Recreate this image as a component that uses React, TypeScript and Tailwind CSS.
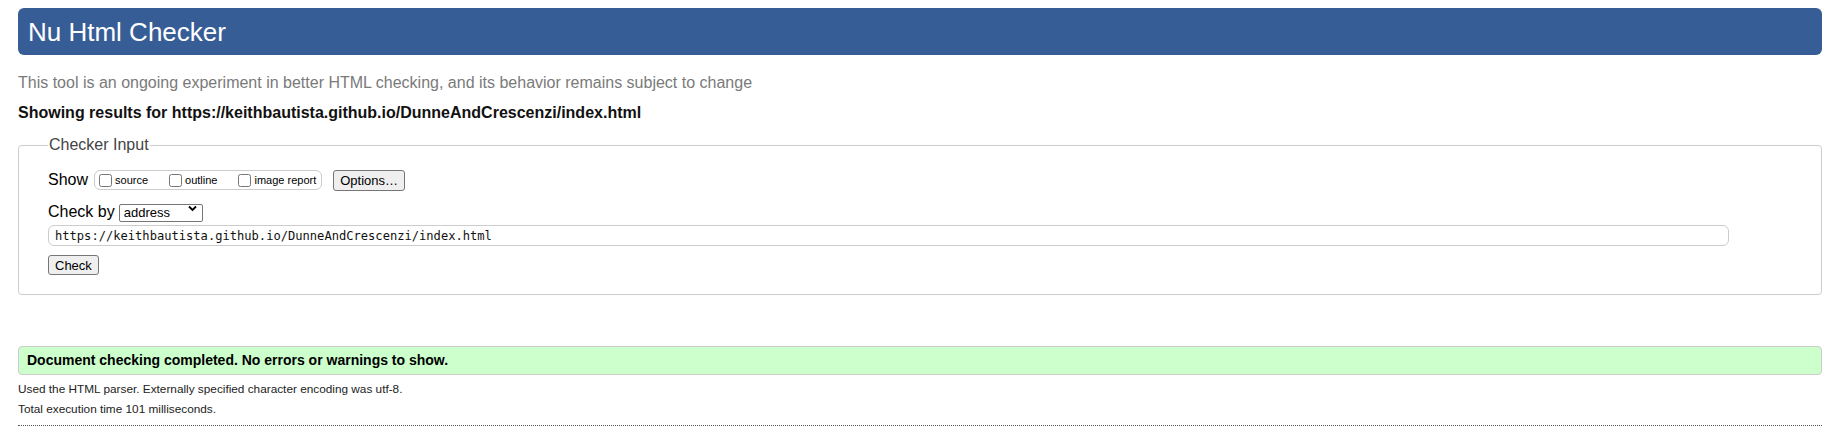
import React from 'react';

const App: React.FC = () => {
  const url = 'https://keithbautista.github.io/DunneAndCrescenzi/index.html';

  return (
    <div className="w-full h-[442px] bg-white pl-[18px] pr-[8px] pt-[8px] font-['Liberation_Sans',Arial,sans-serif] text-black">
      <h1 className="h-[47px] bg-[#375d96] rounded-[6px] text-white text-[26px] leading-none pl-[10px] flex items-center">
        Nu Html Checker
      </h1>

      <p className="mt-[19px] text-[16px] leading-[18px] text-[#7a7a7a]">
        This tool is an ongoing experiment in better HTML checking, and its behavior remains subject to change
      </p>
      <p className="mt-[12px] text-[16px] leading-[18px] font-bold text-[#111]">Showing results for {url}</p>

      <fieldset className="mt-[14px] border border-[#cccccc] rounded-[4px] pl-[29px] pt-[15px] pb-[17px]">
        <legend className="text-[16px] leading-[18px] text-[#444] px-px">Checker Input</legend>

        <div className="flex items-center h-[22px]">
          <span className="text-[16px] leading-none">Show</span>
          <div className="ml-[6px] flex items-center h-[20px] border border-[#cccccc] rounded-[6px] pl-[4px] pr-[5px] text-[11px]">
            <label className="flex items-center">
              <input type="checkbox" className="w-[13px] h-[13px] m-0 mr-[3px]" />
              <span>source</span>
            </label>
            <label className="flex items-center ml-[21px]">
              <input type="checkbox" className="w-[13px] h-[13px] m-0 mr-[3px]" />
              <span>outline</span>
            </label>
            <label className="flex items-center ml-[21px]">
              <input type="checkbox" className="w-[13px] h-[13px] m-0 mr-[3px]" />
              <span>image report</span>
            </label>
          </div>
          <button className="ml-[11px] h-[21px] px-[6px] border border-[#767676] bg-[#efefef] rounded-[3px] text-[13px] leading-none">
            Options…
          </button>
        </div>

        <div className="mt-[10px] flex items-center h-[22px]">
          <span className="text-[16px] leading-none">Check by</span>
          <div className="relative ml-[4px]">
            <select className="appearance-none w-[84px] h-[18px] border border-[#767676] rounded-[2px] pl-[4px] text-[13px] leading-none bg-white">
              <option>address</option>
            </select>
            <svg className="absolute right-[6px] top-[5px] pointer-events-none" width="9" height="7" viewBox="0 0 9 7">
              <path d="M1 1.5 L4.5 5 L8 1.5" fill="none" stroke="#000" strokeWidth="1.8" />
            </svg>
          </div>
        </div>

        <input
          type="text"
          readOnly
          value={url}
          className="block mt-[2px] w-[1681px] h-[21px] border border-[#cccccc] rounded-[6px] pl-[6px] font-['DejaVu_Sans_Mono',monospace] text-[12.1px] text-[#111]"
        />

        <button className="mt-[9px] h-[20px] px-[6px] border border-[#767676] bg-[#efefef] rounded-[3px] text-[13px] leading-none">
          Check
        </button>
      </fieldset>

      <div className="mt-[51px] h-[29px] bg-[#ccffcc] border border-[#cccccc] rounded-[4px] pl-[8px] flex items-center">
        <span className="text-[14px] font-bold">Document checking completed. No errors or warnings to show.</span>
      </div>

      <p className="mt-[7px] text-[11.8px] leading-[14px] text-[#222]">
        Used the HTML parser. Externally specified character encoding was utf-8.
      </p>
      <p className="mt-[6px] text-[11.8px] leading-[14px] text-[#222]">Total execution time 101 milliseconds.</p>

      <div className="mt-[9px] border-t border-dotted border-[#555]" />
    </div>
  );
};

export default App;
